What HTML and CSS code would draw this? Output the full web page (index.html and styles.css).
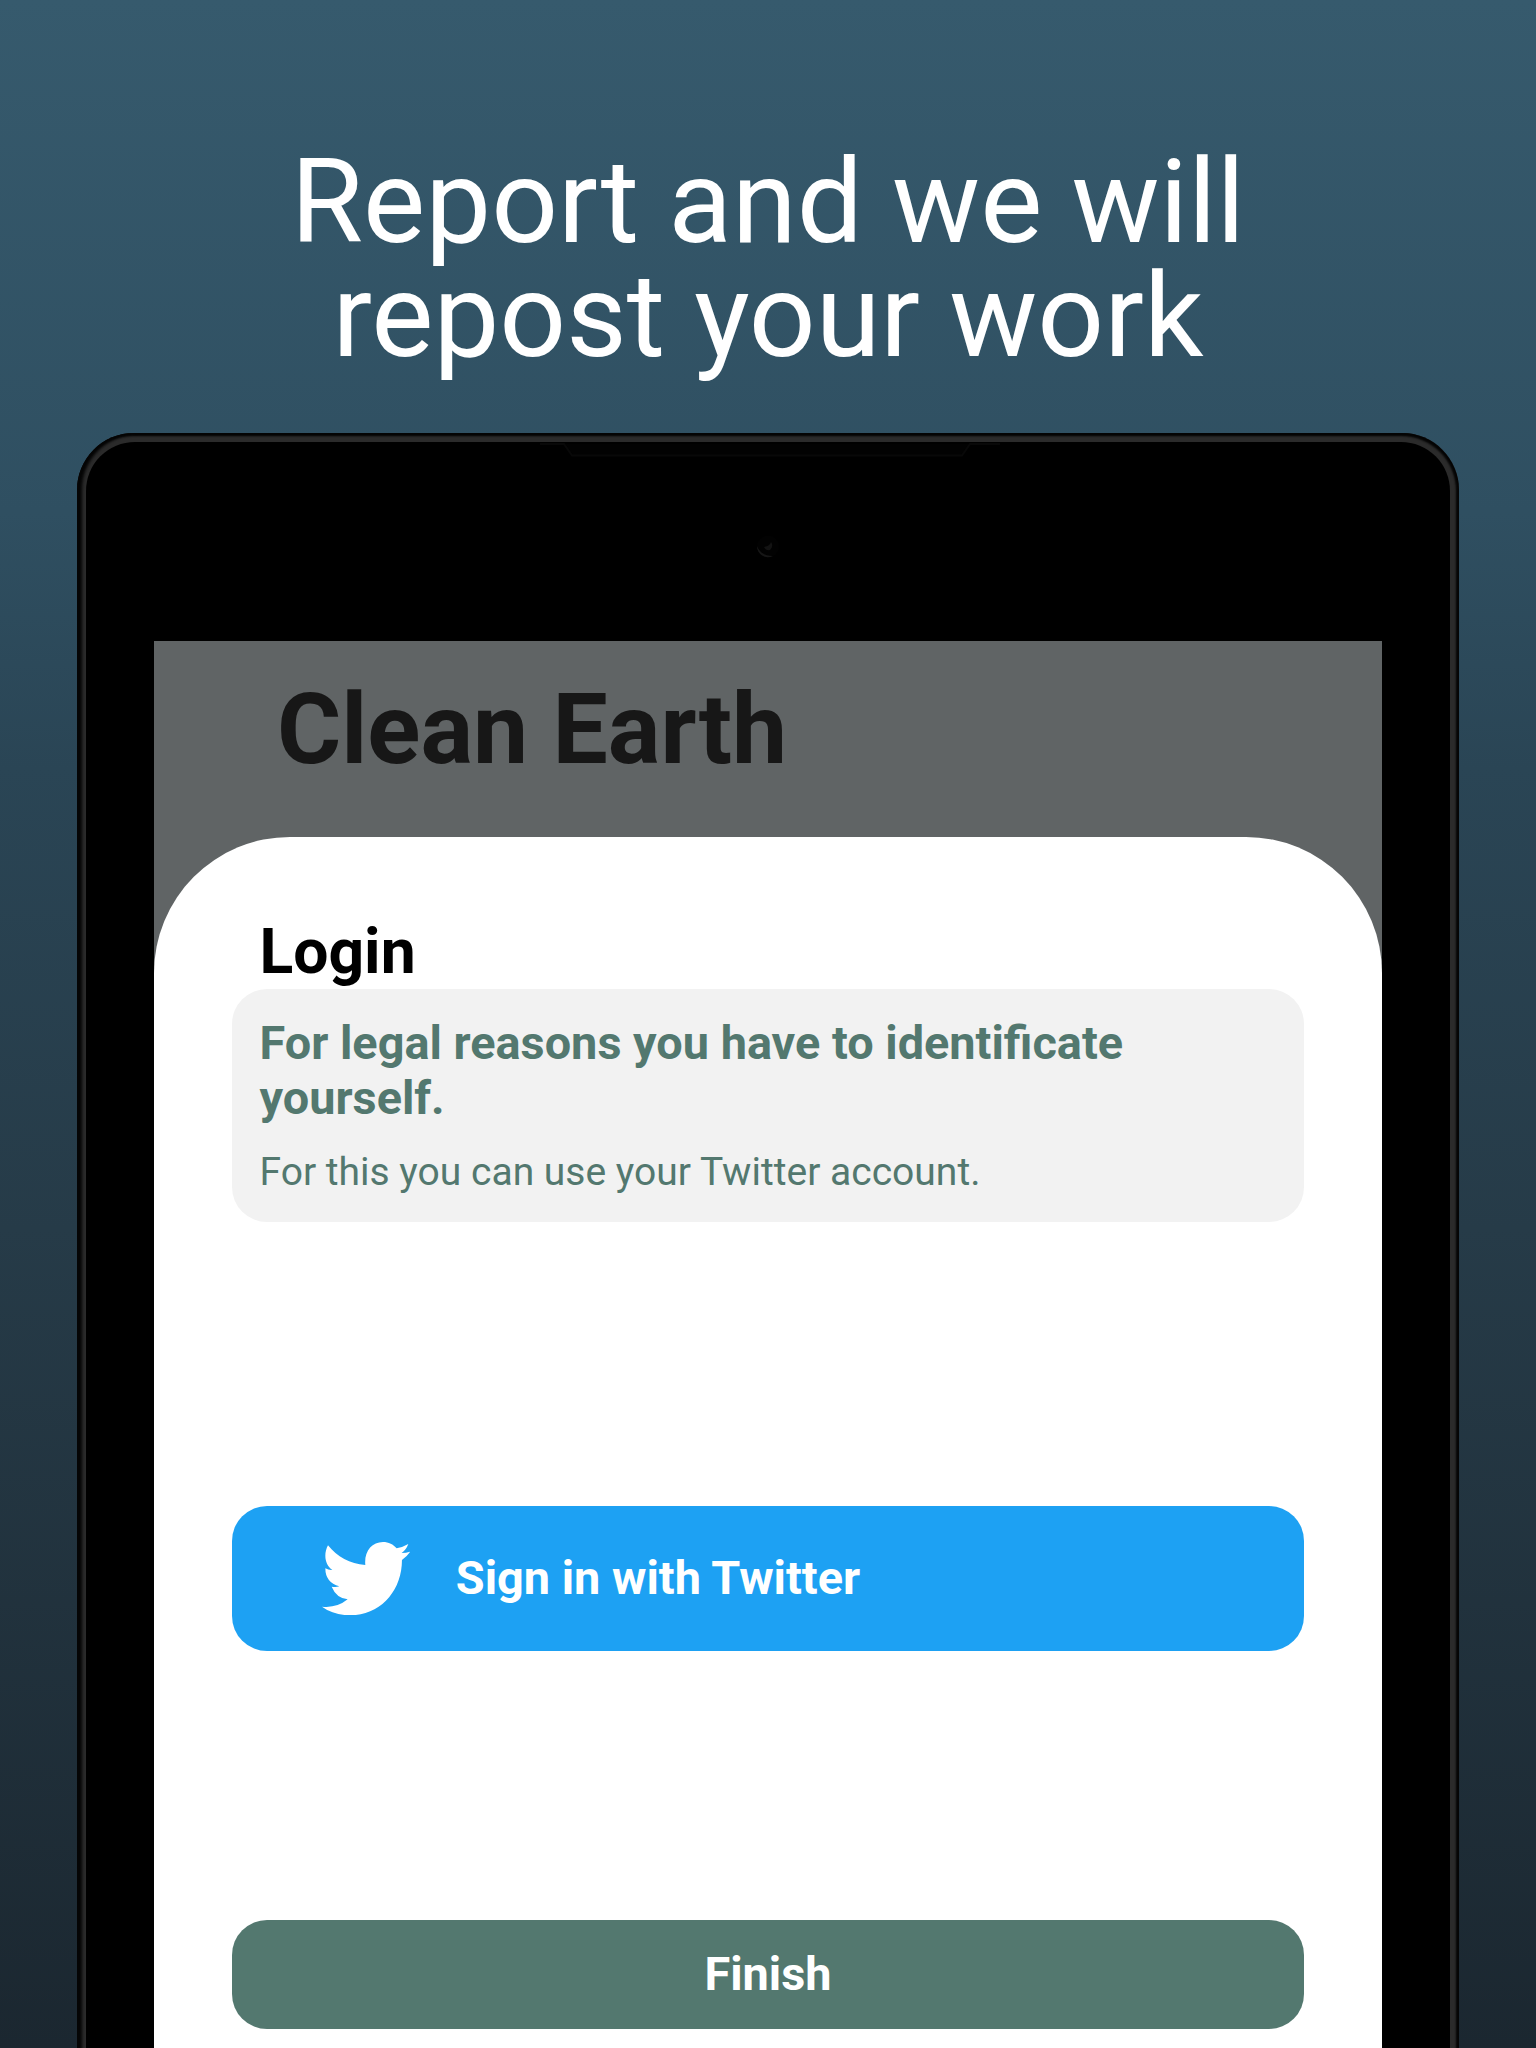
FILE: index.html
```html
<!DOCTYPE html>
<html lang="en">
<head>
<meta charset="utf-8">
<title>Clean Earth</title>
<link rel="stylesheet" href="styles.css">
</head>
<body>
<main class="promo">
  <h1 class="headline">Report and we will<br>repost your work</h1>
  <div class="device">
    <div class="bezel">
      <svg class="hardware" viewBox="0 0 460 150" aria-hidden="true">
        <path d="M0 19H24L32 30.500H422L430 19H460" fill="#020202" stroke="#080808" stroke-width="2"/>
        <circle cx="228" cy="121.500" r="11" fill="#020202"/>
        <path d="M217 121A11 11 0 0 0 233 131Q221 131 217 121Z" fill="#161616"/>
        <path d="M224 122Q230 121 231 117Q234 121 230 125Q226 126 224 122Z" fill="#131313"/>
      </svg>
      <div class="screen">
        <h2 class="app-title">Clean Earth</h2>
        <section class="sheet">
          <h3 class="sheet-title">Login</h3>
          <div class="notice">
            <p class="notice-lead">For legal reasons you have to identificate yourself.</p>
            <p class="notice-text">For this you can use your Twitter account.</p>
          </div>
          <button class="twitter">
            <svg class="bird" viewBox="305 155 265 220" aria-hidden="true">
              <path d="M323 165C350 199 389 221 435 224C431 184 454 155 488 155C505 155 519 162 529 174Q547 171 564 161Q558 178 544 188Q558 188 570 184Q560 199 545 209C545 301 481 375 389 375C358 375 329 366 305 349Q349 354 382 327Q348 323 334 289Q346 292 357 288Q315 277 315 234Q325 240 336 239C315 224 308 193 323 165Z"/>
            </svg>
            <span>Sign in with Twitter</span>
          </button>
          <button class="finish">Finish</button>
        </section>
      </div>
    </div>
  </div>
</main>
</body>
</html>
```

FILE: styles.css
```css
* { box-sizing: border-box; }
body { margin: 0; font-family: Roboto, sans-serif; }
h1, h2, h3, p { margin: 0; }

.promo {
  height: 2048px;
  overflow: hidden;
  padding: 145px 77px 0;
  background: linear-gradient(#365a6d 0%, #2f4f61 25%, #2a4555 37.500%, #263b48 60%, #1b2730 100%);
}
.headline {
  height: 288px;
  color: #fff;
  font-size: 117.300px;
  font-weight: 400;
  line-height: 114px;
  text-align: center;
}
.device {
  height: 1700px;
  padding: 9px;
  border-radius: 57px 57px 0 0;
  background: #2b2b2b;
  box-shadow: inset 4px 0 3px 1px #050505, inset -1px 1px 2px 2px #050505;
}
.bezel {
  position: relative;
  height: 1691px;
  padding: 199px 68px 0;
  border-radius: 49px 49px 0 0;
  background: #000;
}
.hardware {
  position: absolute;
  left: 454px;
  top: -17px;
  width: 460px;
  height: 150px;
  clip-path: inset(18px 0 0);
}
.screen {
  height: 1492px;
  padding-top: 32px;
  background: #606465;
}
.app-title {
  height: 164px;
  padding-left: 123px;
  color: #171717;
  font-size: 98.300px;
  font-weight: 700;
  line-height: 114px;
}
.sheet {
  display: flex;
  flex-direction: column;
  height: 1296px;
  padding: 78px 78px 0;
  border-radius: 136px 136px 0 0;
  background: #fff;
}
.sheet-title {
  height: 73.500px;
  padding-left: 27.500px;
  color: #000;
  font-size: 62.400px;
  font-weight: 700;
  line-height: 73px;
}
.notice {
  height: 233px;
  padding: 27px 27px 0 27.500px;
  border-radius: 35px;
  background: #f2f2f2;
  color: #53786f;
}
.notice-lead {
  font-size: 46.850px;
  font-weight: 700;
  line-height: 55px;
}
.notice-text {
  margin-top: 23.500px;
  font-size: 39.030px;
  line-height: 46px;
}
.twitter, .finish {
  display: flex;
  align-items: center;
  flex: none;
  border: 0;
  border-radius: 35px;
  color: #fff;
  font: 700 46.850px/55px Roboto, sans-serif;
}
.twitter {
  gap: 45.500px;
  height: 145px;
  margin-top: 284.500px;
  padding: 0 90px;
  background: #1da1f3;
}
.bird {
  width: 88.300px;
  height: 73.300px;
  fill: #fff;
}
.finish {
  justify-content: center;
  height: 109px;
  margin-top: 268.500px;
  background: #53786f;
}
```
